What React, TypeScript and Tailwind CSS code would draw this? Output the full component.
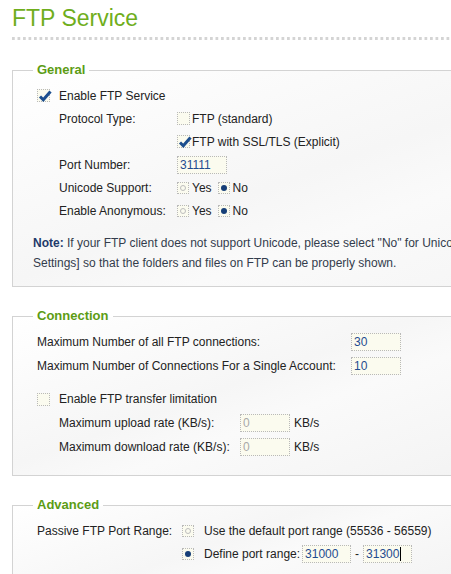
import type { ReactNode } from "react";

const font = { fontFamily: '"Liberation Sans", Arial, sans-serif' };

function Check({ checked }: { checked?: boolean }) {
  return (
    <span className="relative inline-block h-[13px] w-[13px] shrink-0 border border-dotted border-[#b9b9b9] bg-[#fbfbef]">
      {checked && (
        <svg viewBox="0 0 14 14" className="absolute left-[0px] top-[-1px] h-[14px] w-[14px]">
          <polyline
            points="2,7.5 5.3,10.8 12.5,2.5"
            fill="none"
            stroke="#1d4f8f"
            strokeWidth="3"
            strokeLinejoin="miter"
          />
        </svg>
      )}
    </span>
  );
}

function Radio({ checked }: { checked?: boolean }) {
  return (
    <span className="inline-flex h-[12px] w-[12px] shrink-0 items-center justify-center border border-dotted border-[#b9b9b9] bg-[#fbfbef]">
      {checked ? (
        <span className="h-[6px] w-[6px] rounded-full bg-[#173f78]" />
      ) : (
        <span className="h-[6px] w-[6px] rounded-full border border-[#bdbdbd]" />
      )}
    </span>
  );
}

function Field({ value, width = 50, dim, caret }: { value: string; width?: number; dim?: boolean; caret?: boolean }) {
  return (
    <span
      className={`inline-flex h-[18px] items-center border border-dotted border-[#b9b9b9] bg-[#fbfbef] pl-[2px] text-[12px] ${
        dim ? "text-[#a9a9a9]" : "text-[#1f4c8f]"
      }`}
      style={{ width }}
    >
      {value}
      {caret && <span className="ml-px inline-block h-[14px] w-px bg-black" />}
    </span>
  );
}

function Box({ title, className, children }: { title: string; className?: string; children: ReactNode }) {
  return (
    <fieldset
      className={`w-[470px] border border-[#d3d3d3] bg-[linear-gradient(160deg,#ffffff_0%,#f6f6f6_45%,#fafafa_60%,#f3f3f3_100%)] pl-[20px] ${className ?? ""}`}
    >
      <legend className="px-[4px] text-[13px] font-bold leading-[16px] text-[#5c9c14]">{title}</legend>
      {children}
    </fieldset>
  );
}

export default function App() {
  return (
    <div className="h-[574px] w-[451px] overflow-hidden bg-white pl-[12px] text-[12px] text-[#222]" style={font}>
      <h1 className="pt-[3px] text-[23px] leading-[30px] text-[#6fae1c]">FTP Service</h1>
      <div className="mt-[4px] h-[3px] bg-[linear-gradient(to_right,#d4d4d4_3px,transparent_3px)] bg-[length:5.5px_3px] bg-repeat-x" />

      {/* General */}
      <Box title="General" className="mt-[22px] pb-[13px] pt-[6px]">
        <div className="ml-[4px]">
          <div className="flex h-[23px] items-center gap-[9px]">
            <Check checked />
            <span>Enable FTP Service</span>
          </div>
          <div className="ml-[22px]">
            <div className="flex h-[23px] items-center">
              <span className="w-[118px]">Protocol Type:</span>
              <Check />
              <span className="ml-[2px]">FTP (standard)</span>
            </div>
            <div className="flex h-[23px] items-center">
              <span className="w-[118px]" />
              <Check checked />
              <span className="ml-[2px]">FTP with SSL/TLS (Explicit)</span>
            </div>
            <div className="flex h-[23px] items-center">
              <span className="w-[118px]">Port Number:</span>
              <Field value="31111" />
            </div>
            <div className="flex h-[23px] items-center">
              <span className="w-[118px]">Unicode Support:</span>
              <Radio />
              <span className="ml-[3px] mr-[6px]">Yes</span>
              <Radio checked />
              <span className="ml-[3px]">No</span>
            </div>
            <div className="flex h-[23px] items-center">
              <span className="w-[118px]">Enable Anonymous:</span>
              <Radio />
              <span className="ml-[3px] mr-[6px]">Yes</span>
              <Radio checked />
              <span className="ml-[3px]">No</span>
            </div>
          </div>
        </div>
        <p className="mt-[11px] whitespace-nowrap leading-[20px] text-[#333c4c]">
          <b className="text-[#1e3a6a]">Note:</b> If your FTP client does not support Unicode, please select "No" for Unicode Support and choose a language in [General
          <br />
          Settings] so that the folders and files on FTP can be properly shown.
        </p>
      </Box>

      {/* Connection */}
      <Box title="Connection" className="mt-[21px] pb-[16px] pt-[6px]">
        <div className="ml-[4px]">
          <div className="flex h-[24px] items-center">
            <span className="w-[314px]">Maximum Number of all FTP connections:</span>
            <Field value="30" />
          </div>
          <div className="flex h-[24px] items-center">
            <span className="w-[314px]">Maximum Number of Connections For a Single Account:</span>
            <Field value="10" />
          </div>
          <div className="mt-[9px] flex h-[24px] items-center gap-[9px]">
            <Check />
            <span>Enable FTP transfer limitation</span>
          </div>
          <div className="ml-[22px]">
            <div className="flex h-[24px] items-center">
              <span className="w-[181px]">Maximum upload rate (KB/s):</span>
              <Field value="0" dim />
              <span className="ml-[4px]">KB/s</span>
            </div>
            <div className="flex h-[24px] items-center">
              <span className="w-[181px]">Maximum download rate (KB/s):</span>
              <Field value="0" dim />
              <span className="ml-[4px]">KB/s</span>
            </div>
          </div>
        </div>
      </Box>

      {/* Advanced */}
      <Box title="Advanced" className="mt-[21px] pb-[16px] pt-[6px]">
        <div className="ml-[4px]">
          <div className="flex h-[23px] items-center">
            <span className="w-[145px]">Passive FTP Port Range:</span>
            <Radio />
            <span className="ml-[10px]">Use the default port range (55536 - 56559)</span>
          </div>
          <div className="flex h-[23px] items-center">
            <span className="w-[145px]" />
            <Radio checked />
            <span className="ml-[10px] mr-[2px]">Define port range:</span>
            <Field value="31000" width={49} />
            <span className="mx-[4px]">-</span>
            <Field value="31300" width={49} caret />
          </div>
        </div>
      </Box>
    </div>
  );
}
